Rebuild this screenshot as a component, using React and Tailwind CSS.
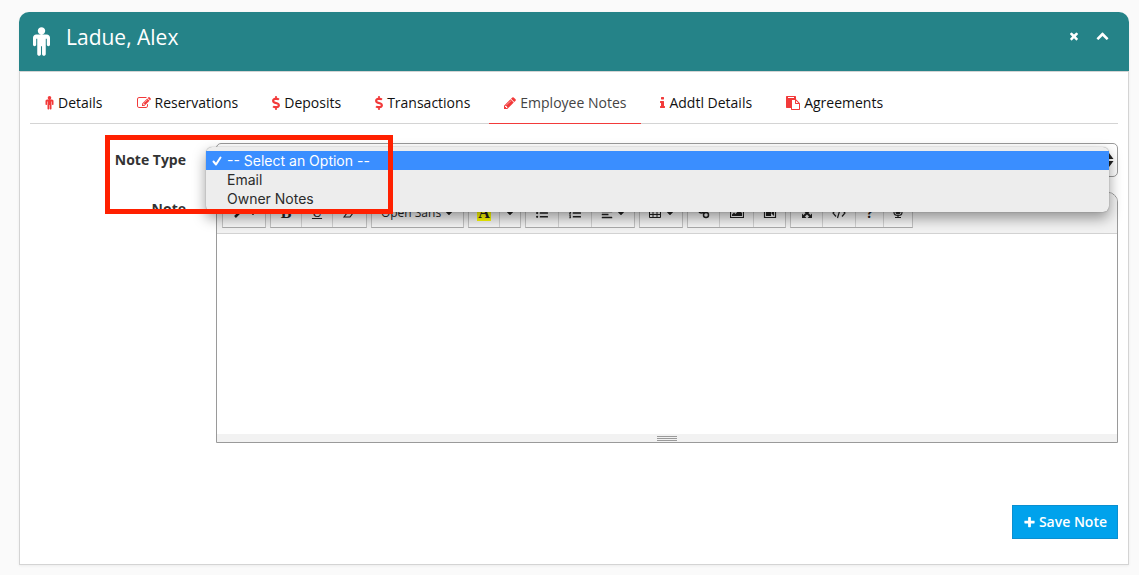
import React, { useState } from 'react';
import { FaDollarSign, FaCaretDown, FaListUl, FaListOl, FaAlignLeft } from 'react-icons/fa';

const PATHS = {
  male: 'M1408 640v416q0 40-28 68t-68 28-68-28-28-68v-352h-64v912q0 46-33 79t-79 33-79-33-33-79v-464h-64v464q0 46-33 79t-79 33-79-33-33-79v-912h-64v352q0 40-28 68t-68 28-68-28-28-68v-416q0-80 56-136t136-56h640q80 0 136 56t56 136zm-288-416q0 93-65.500 158.500t-158.500 65.500-158.500-65.500-65.500-158.500 65.500-158.500 158.500-65.500 158.500 65.500 65.500 158.500z',
  edit: 'M888 1184l116-116-152-152-116 116v56h96v96h56zm440-720q-16-16-33 1l-350 350q-17 17-1 33t33-1l350-350q17-17 1-33zm80 594v190q0 119-84.500 203.500t-203.500 84.500h-832q-119 0-203.500-84.500t-84.500-203.500v-832q0-119 84.500-203.500t203.500-84.500h832q63 0 117 25 15 7 18 23 3 17-9 29l-49 49q-14 14-32 8-23-6-45-6h-832q-66 0-113 47t-47 113v832q0 66 47 113t113 47h832q66 0 113-47t47-113v-126q0-13 9-22l64-64q15-15 35-7t20 29zm-96-738l288 288-672 672h-288v-288zm444 132l-92 92-288-288 92-92q28-28 68-28t68 28l152 152q28 28 28 68t-28 68z',
  pencil: 'M491 1536l91-91-235-235-91 91v107h128v128h107zm523-928q0-22-22-22-10 0-17 7l-542 542q-7 7-7 17 0 22 22 22 10 0 17-7l542-542q7-7 7-17zm-54-192l416 416-832 832h-416v-416zm683 96q0 53-37 90l-166 166-416-416 166-165q36-38 90-38 53 0 91 38l235 234q37 39 37 91z',
  info: 'M1216 1344v128q0 26-19 45t-45 19h-512q-26 0-45-19t-19-45v-128q0-26 19-45t45-19h64v-384h-64q-26 0-45-19t-19-45v-128q0-26 19-45t45-19h384q26 0 45 19t19 45v576h64q26 0 45 19t19 45zm-128-1152v192q0 26-19 45t-45 19h-256q-26 0-45-19t-19-45v-192q0-26 19-45t45-19h256q26 0 45 19t19 45z',
  paste: 'M768 1664h896v-640h-416q-40 0-68-28t-28-68v-416h-384v1152zm256-1440v-64q0-13-9.500-22.500t-22.500-9.500h-704q-13 0-22.500 9.500t-9.500 22.500v64q0 13 9.500 22.500t22.500 9.500h704q13 0 22.500-9.500t9.500-22.500zm256 672h299l-299-299v299zm512 128v672q0 40-28 68t-68 28h-960q-40 0-68-28t-28-68v-160h-544q-40 0-68-28t-28-68v-1344q0-40 28-68t68-28h1088q40 0 68 28t28 68v328q21 13 36 28l408 408q28 28 48 76t20 88z',
  plus: 'M1600 736v192q0 40-28 68t-68 28h-416v416q0 40-28 68t-68 28h-192q-40 0-68-28t-28-68v-416h-416q-40 0-68-28t-28-68v-192q0-40 28-68t68-28h416v-416q0-40 28-68t68-28h192q40 0 68 28t28 68v416h416q40 0 68 28t28 68z',
  times: 'M1490 1322q0 40-28 68l-136 136q-28 28-68 28t-68-28l-294-294-294 294q-28 28-68 28t-68-28l-136-136q-28-28-28-68t28-68l294-294-294-294q-28-28-28-68t28-68l136-136q28-28 68-28t68 28l294 294 294-294q28-28 68-28t68 28l136 136q28 28 28 68t-28 68l-294 294 294 294q28 28 28 68z',
  chevronUp: 'M1683 1331l-166 165q-19 19-45 19t-45-19l-531-531-531 531q-19 19-45 19t-45-19l-166-165q-19-19-19-45.500t19-45.500l742-741q19-19 45-19t45 19l742 741q19 19 19 45.500t-19 45.500z',
};

function Icon({ name, box = '0 0 1792 1792', className }) {
  return (
    <svg viewBox={box} fill="currentColor" className={className} aria-hidden="true">
      <path d={PATHS[name]} />
    </svg>
  );
}

// small line glyphs of the editor toolbar, all on a 14x12 grid
function Glyph({ children }) {
  return (
    <svg viewBox="0 0 14 12" className="h-3 w-[14px]" fill="none" stroke="currentColor" strokeWidth="1.200" aria-hidden="true">
      {children}
    </svg>
  );
}

const tabs = [
  { id: 'details', label: 'Details', icon: <Icon name="male" box="384 0 1024 1792" className="h-[14px] w-[9px]" /> },
  { id: 'reservations', label: 'Reservations', icon: <Icon name="edit" className="size-[14px]" /> },
  { id: 'deposits', label: 'Deposits', icon: <FaDollarSign className="h-[14px] w-2" /> },
  { id: 'transactions', label: 'Transactions', icon: <FaDollarSign className="h-[14px] w-2" /> },
  { id: 'notes', label: 'Employee Notes', icon: <Icon name="pencil" box="128 0 1536 1792" className="h-[14px] w-3" /> },
  { id: 'addtl', label: 'Addtl Details', icon: <Icon name="info" box="576 0 640 1792" className="h-[14px] w-[5px]" /> },
  { id: 'agreements', label: 'Agreements', icon: <Icon name="paste" className="size-[14px]" /> },
];

const options = ['-- Select an Option --', 'Email', 'Owner Notes'];

const caret = <FaCaretDown className="size-[10px]" />;

const toolbar = [
  [{ title: 'Style', width: 'w-[42px]', body: <><Glyph><path d="M4 10 12 2" strokeWidth="2.500" /></Glyph>{caret}</> }],
  [
    { title: 'Bold', width: 'w-[31px]', body: <span className="font-['Liberation_Serif',serif] text-base leading-4 font-bold">B</span> },
    { title: 'Underline', width: 'w-[31px]', body: <span className="font-['Liberation_Serif',serif] text-sm leading-4 underline">U</span> },
    { title: 'Remove Font Style', width: 'w-[33px]', body: <Glyph><path d="M1 10 7 2h6L7 10zM4 6h6" /></Glyph> },
  ],
  [{ title: 'Font Family', width: 'w-[91px]', body: <>Open Sans{caret}</> }],
  [
    { title: 'Recent Color', width: 'w-[31px]', body: <span className="bg-[#ff0] px-px font-['Liberation_Serif',serif] text-base leading-4 font-bold">A</span> },
    { title: 'More Color', width: 'w-5', body: caret },
  ],
  [
    { title: 'Unordered list', width: 'w-[33px]', body: <FaListUl className="size-3" /> },
    { title: 'Ordered list', width: 'w-[33px]', body: <FaListOl className="size-3" /> },
    { title: 'Paragraph', width: 'w-[42px]', body: <><FaAlignLeft className="size-3" />{caret}</> },
  ],
  [{ title: 'Table', width: 'w-[42px]', body: <><Glyph><path d="M1.500 1.500h11v9h-11zM1.500 4.500h11M1.500 7.500h11M5 1.500v9M9 1.500v9" strokeWidth="1" /></Glyph>{caret}</> }],
  [
    { title: 'Link', width: 'w-8', body: <Glyph><circle cx="9" cy="8" r="2.500" strokeWidth="1.500" /><circle cx="4.500" cy="3.500" r="2.500" strokeWidth="1.500" /><path d="M6 5.500 7.500 6.500" /></Glyph> },
    { title: 'Picture', width: 'w-[34px]', body: <Glyph><path d="M.5.5h13v10H.5z" /><path d="M2 9V7.500l2-2 1.500 1.500L9 3l3 3v3z" fill="currentColor" stroke="none" /></Glyph> },
    { title: 'Video', width: 'w-[31px]', body: <Glyph><path d="M1.500.5h11v10h-11z" /><path d="M3 3h5v6H3zM8 6l3-3v6z" fill="currentColor" stroke="none" /></Glyph> },
  ],
  [
    { title: 'Full Screen', width: 'w-8', body: <Glyph><path d="M4 3 10 9M10 3 4 9" strokeWidth="2" /><path d="M2 6.500V11h4.500zM12 6.500V11H7.500zM2 5V.5h4.500zM12 5V.5H7.500z" fill="currentColor" stroke="none" /></Glyph> },
    { title: 'Code View', width: 'w-[33px]', body: <Glyph><path d="M4 2.500 1 6l3 3.500M10 2.500 13 6l-3 3.500M8.500 1 5.500 11" /></Glyph> },
    { title: 'Help', width: 'w-7', body: <span className="text-sm font-bold">?</span> },
    { title: 'Dictate', width: 'w-7', body: <Glyph><rect x="5" y=".5" width="4" height="6.500" rx="2" fill="currentColor" /><path d="M3 4.500v1q0 3 4 3t4-3v-1M7 8.500v2M4 10.500h6" /></Glyph> },
  ],
];

function Tabs({ active, onSelect }) {
  return (
    <nav className="flex h-[52px] gap-1 border-b border-[#d4d4d4]">
      {tabs.map(t => (
        <a
          key={t.id}
          href={`#${t.id}`}
          onClick={() => onSelect(t.id)}
          className={`-mb-px flex items-center gap-1 border-b px-[15px] pt-[10px] whitespace-nowrap ${
            t.id === active ? 'border-[#f23a3a] text-[#444]' : 'border-transparent text-[#111]'
          }`}
        >
          <span className="text-[#f23a3a]">{t.icon}</span>
          {t.label}
        </a>
      ))}
    </nav>
  );
}

function NoteTypeMenu({ value, onPick }) {
  return (
    <ul
      role="listbox"
      className="absolute top-1 right-[9px] -left-[10px] z-10 rounded-md bg-[#ededed] pt-1 pb-1 font-['Inter',sans-serif] text-sm leading-[19px] text-[#2b2b2b] shadow-[0_0_1px_rgba(0,0,0,0.5),0_6px_14px_rgba(0,0,0,0.4)]"
    >
      {options.map(o => (
        <li
          key={o}
          role="option"
          aria-selected={o === value}
          onClick={() => onPick(o)}
          className={`flex items-center ${o === value ? 'bg-[#3a8eff] text-white' : ''}`}
        >
          <span className="flex w-[21px] justify-center">
            {o === value && (
              <svg viewBox="0 0 10 10" className="size-[10px]" fill="none" stroke="currentColor" strokeWidth="2" strokeLinecap="round" strokeLinejoin="round">
                <path d="M1.500 5.500 4 8.500 8.500 1.500" />
              </svg>
            )}
          </span>
          {o}
        </li>
      ))}
    </ul>
  );
}

function Editor() {
  return (
    <div className="overflow-hidden rounded-t-[10px] border border-[#9a9a9a] bg-white">
      <div className="flex h-[41px] items-start gap-[5px] border-b border-[#d2d2d2] bg-[#f2f2f2] px-[5px] pt-[5px]">
        {toolbar.map((group, i) => (
          <div key={i} className="-mr-px flex divide-x divide-[#d2d2d2] border border-[#c4c4c4] border-b-[#aaa] bg-[#f7f7f7] last:mr-0">
            {group.map(b => (
              <button
                key={b.title}
                type="button"
                title={b.title}
                className={`flex h-7 items-center justify-center gap-[3px] text-xs text-[#222] ${b.width}`}
              >
                {b.body}
              </button>
            ))}
          </div>
        ))}
      </div>
      <textarea id="note" className="block h-[200px] w-full resize-none p-2 outline-none" />
      <div className="flex h-2 flex-col items-center justify-center gap-px bg-[#f2f2f2]">
        <span className="h-px w-5 bg-[#9a9a9a]" />
        <span className="h-px w-5 bg-[#9a9a9a]" />
        <span className="h-px w-5 bg-[#9a9a9a]" />
      </div>
    </div>
  );
}

export default function App() {
  const [activeTab, setActiveTab] = useState('notes');
  const [noteType, setNoteType] = useState(options[0]);

  return (
    <div className="min-h-screen bg-[#fafafa] pt-3 pr-[10px] pb-[10px] pl-[19px] font-['Open_Sans',sans-serif] text-sm text-[#333]">
      <section className="rounded-t-[10px] shadow-[0_1px_3px_rgba(0,0,0,0.06)]">
        <header className="flex h-[59px] items-center rounded-t-[10px] bg-[#258388] pr-5 pl-[14px] text-white">
          <Icon name="male" box="384 0 1024 1792" className="h-[30px] w-[17px]" />
          <h1 className="ml-4 pb-[10px] text-[21px] leading-7">Ladue, Alex</h1>
          <div className="ml-auto flex items-center gap-4 pb-3">
            <button type="button" aria-label="Close"><Icon name="times" className="size-3" /></button>
            <button type="button" aria-label="Collapse"><Icon name="chevronUp" className="size-[13px]" /></button>
          </div>
        </header>

        <div className="border border-[#d4d4d4] bg-white px-[10px] pb-[25px]">
          <Tabs active={activeTab} onSelect={setActiveTab} />

          <form className="mt-[19px]" onSubmit={(e) => e.preventDefault()}>
            <div className="relative grid grid-cols-[156px_1fr] gap-x-[30px] gap-y-[15px]">
              <label htmlFor="note-type" className="pt-[7px] text-right font-bold">Note Type</label>
              <div className="relative">
                <select
                  id="note-type"
                  value={noteType}
                  onChange={(e) => setNoteType(e.target.value)}
                  className="block h-[34px] w-full appearance-none rounded-[5px] border border-[#9a9a9a] bg-white px-3"
                >
                  {options.map(o => <option key={o}>{o}</option>)}
                </select>
                <svg viewBox="0 0 10 14" className="pointer-events-none absolute top-[10px] right-1 h-[14px] w-[10px]" fill="#222" aria-hidden="true">
                  <path d="M5 0 9.500 6H.5zM5 14 .5 8h9z" />
                </svg>
                <NoteTypeMenu value={noteType} onPick={setNoteType} />
              </div>

              <label htmlFor="note" className="pt-[7px] text-right font-bold">Note</label>
              <Editor />

              {/* callout around the note type options */}
              <div className="pointer-events-none absolute -top-2 left-[75px] z-20 h-[79px] w-[288px] border-5 border-[#ff2000]" />
            </div>

            <div className="mt-[62px] flex justify-end">
              <button
                type="submit"
                className="flex h-[34px] items-center gap-[3px] border border-[#0a8fd0] bg-[#00a2ec] px-[10px] font-semibold text-white"
              >
                <Icon name="plus" className="size-[13px]" />
                Save Note
              </button>
            </div>
          </form>
        </div>
      </section>
    </div>
  );
}
